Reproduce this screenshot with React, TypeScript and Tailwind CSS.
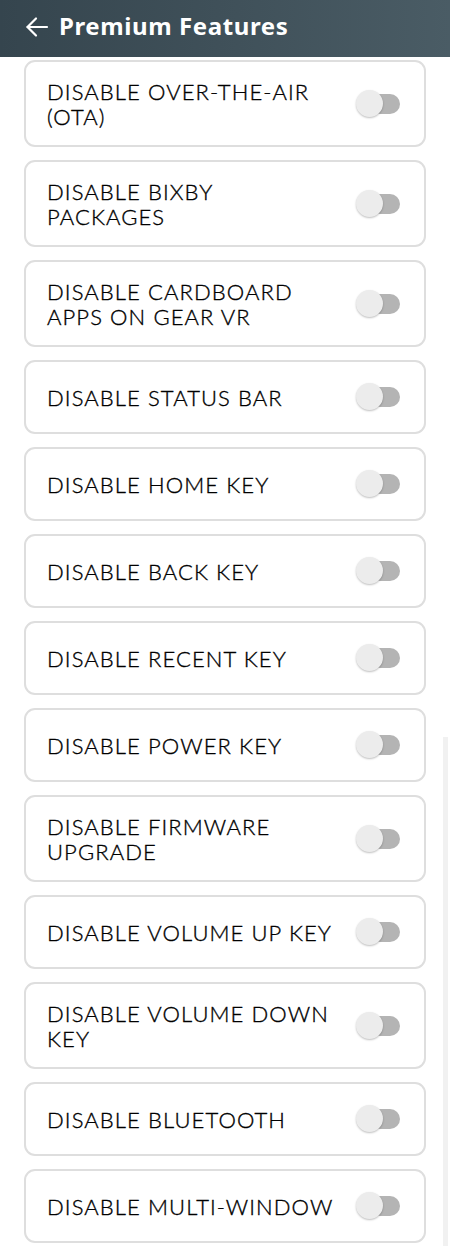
import React from "react";

const items: string[][] = [
  ["DISABLE OVER-THE-AIR", "(OTA)"],
  ["DISABLE BIXBY", "PACKAGES"],
  ["DISABLE CARDBOARD", "APPS ON GEAR VR"],
  ["DISABLE STATUS BAR"],
  ["DISABLE HOME KEY"],
  ["DISABLE BACK KEY"],
  ["DISABLE RECENT KEY"],
  ["DISABLE POWER KEY"],
  ["DISABLE FIRMWARE", "UPGRADE"],
  ["DISABLE VOLUME UP KEY"],
  ["DISABLE VOLUME DOWN", "KEY"],
  ["DISABLE BLUETOOTH"],
  ["DISABLE MULTI-WINDOW"],
];

function Toggle() {
  return (
    <div className="relative w-[45px] h-[28px] shrink-0">
      <div className="absolute left-[14px] top-[4px] w-[30px] h-[20px] rounded-full bg-[#b4b4b4]" />
      <div className="absolute left-0 top-0 w-[27px] h-[27px] rounded-full bg-[#ececec] shadow-[0_1px_2px_rgba(0,0,0,0.25)]" />
    </div>
  );
}

export default function App() {
  return (
    <div
      className="relative w-[450px] h-[1246px] overflow-hidden bg-white"
      style={{ fontFamily: "Lato, 'Noto Sans', sans-serif" }}
    >
      <div className="h-[57px] flex items-center pl-[25px] gap-[10px] bg-gradient-to-r from-[#35454e] to-[#4a5c65]">
        <svg width="24" height="24" viewBox="0 0 24 24" fill="none" stroke="white" strokeWidth="2.2" strokeLinecap="round" strokeLinejoin="round" className="-mt-[3px]">
          <path d="M22 12H2.5" />
          <path d="M11 3.5l-8.5 8.5 8.5 8.5" />
        </svg>
        <div
          className="text-white text-[24px] font-bold leading-none -mt-[6px] tracking-[0.6px]"
          style={{ fontFamily: "'Noto Sans', Lato, sans-serif" }}
        >
          Premium Features
        </div>
      </div>
      <div className="flex flex-col gap-[13px] px-[24px] pt-[3px]">
        {items.map((lines, i) => (
          <div
            key={i}
            className={`flex items-center justify-between border-2 border-[#dedede] rounded-[11px] pl-[21px] pr-[23px] ${lines.length > 1 ? "h-[87px]" : "h-[74px]"}`}
          >
            <div className="text-[22px] leading-[25px] text-black font-light tracking-[1.1px] [-webkit-text-stroke:0.35px_black]">
              {lines.map((l, j) => (
                <div key={j}>{l}</div>
              ))}
            </div>
            <Toggle />
          </div>
        ))}
      </div>
      <div className="absolute right-[2px] top-[737px] w-[5px] h-[509px] bg-[#f1f1f1]" />
    </div>
  );
}
